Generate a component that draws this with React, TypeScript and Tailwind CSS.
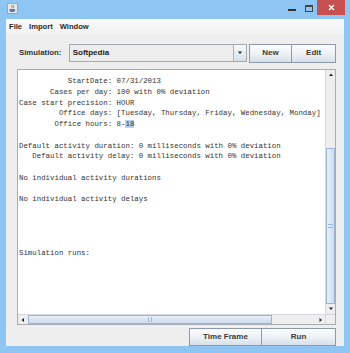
import React from 'react'

const ui = { fontFamily: '"Liberation Sans", Arial, sans-serif' }
const mono = { fontFamily: '"Liberation Mono", "Courier New", monospace' }

const JavaIcon = () => (
  <svg width="11" height="11" viewBox="0 0 11 11">
    <rect x="0.5" y="0.5" width="10" height="10" fill="#dfe6ee" stroke="#9aa6b4" />
    <path d="M5 2 C4 3.5 6 4 5 5.5 M6.5 2.5 C6 3.5 7 4 6.4 5" stroke="#e0602a" strokeWidth="0.9" fill="none" />
    <path d="M2.5 6 H8 V7.5 C8 8.6 7 9 5.2 9 C3.5 9 2.5 8.6 2.5 7.5 Z" fill="#5a7ba6" />
  </svg>
)

const Btn = ({ label, className }: { label: string; className: string }) => (
  <div
    className={`flex items-center justify-center border border-[#8d9aa9] bg-gradient-to-b from-[#fbfcfd] via-[#eef2f6] to-[#d6dfe9] text-[8px] font-bold text-[#3a3a3a] ${className}`}
    style={ui}
  >
    {label}
  </div>
)

const Arrow = ({ dir }: { dir: 'up' | 'down' | 'left' | 'right' }) => {
  const pts = {
    up: '1,4 5,4 3,1.5',
    down: '1,1.5 5,1.5 3,4',
    left: '4,1 4,5 1.5,3',
    right: '1.5,1 1.5,5 4,3',
  }[dir]
  return (
    <svg width="6" height="6" viewBox="0 0 6 6">
      <polygon points={pts} fill="#222" />
    </svg>
  )
}

const lines = [
  '           StartDate: 07/31/2013',
  '       Cases per day: 100 with 0% deviation',
  'Case start precision: HOUR',
  '         Office days: [Tuesday, Thursday, Friday, Wednesday, Monday]',
  'OFFICE',
  '',
  'Default activity duration: 0 milliseconds with 0% deviation',
  '   Default activity delay: 0 milliseconds with 0% deviation',
  '',
  'No individual activity durations',
  '',
  'No individual activity delays',
  '',
  '',
  '',
  '',
  'Simulation runs:',
]

export default function App() {
  return (
    <div className="flex h-[353px] w-[350px] flex-col bg-[#8ec5f2]">
      {/* title bar */}
      <div className="flex h-[19px] shrink-0 items-start">
        <div className="ml-[7px] mt-[3px]">
          <JavaIcon />
        </div>
        <div className="flex-1" />
        <div className="mt-[9px] h-[2px] w-[8px] bg-[#333]" />
        <div className="ml-[9px] mt-[5px] h-[7px] w-[8px] border border-[#444] border-t-2" />
        <div className="ml-[4px] mr-[5px] flex h-[15px] w-[28px] items-center justify-center bg-[#c75050]">
          <svg width="7" height="7" viewBox="0 0 7 7">
            <path d="M1 1 L6 6 M6 1 L1 6" stroke="#fff" strokeWidth="1.4" />
          </svg>
        </div>
      </div>

      {/* window body */}
      <div className="mx-[6px] mb-[8px] flex flex-1 flex-col bg-[#eeeeee]">
        {/* menu bar */}
        <div
          className="flex h-[15px] shrink-0 items-center gap-[7px] bg-gradient-to-b from-[#fafafa] to-[#f2f2f2] pl-[3px] text-[7.6px] font-bold text-[#2a2a2a]"
          style={ui}
        >
          <span>File</span>
          <span>Import</span>
          <span>Window</span>
        </div>

        <div className="flex flex-1 flex-col pl-[11px] pr-[8px] pt-[10px]">
          {/* simulation row */}
          <div className="flex h-[18px] items-center">
            <span className="ml-[2px] w-[50px] text-[7.8px] font-bold text-[#333]" style={ui}>
              Simulation:
            </span>
            <div className="flex h-[18px] w-[179px] border border-[#a3a9b1] bg-[#ededed]">
              <div className="flex flex-1 items-center pl-[3px] text-[8px] font-bold text-[#222]" style={ui}>
                Softpedia
              </div>
              <div className="flex w-[13px] items-center justify-center border-l border-[#a9b4c2] bg-gradient-to-b from-[#f8fafc] to-[#d5dfea]">
                <Arrow dir="down" />
              </div>
            </div>
            <Btn label="New" className="ml-[2px] h-[19px] w-[44px]" />
            <Btn label="Edit" className="h-[19px] w-[44px] border-l-0" />
          </div>

          {/* text area */}
          <div className="mt-[7px] grid h-[256px] grid-cols-[1fr_10px] grid-rows-[1fr_10px] border border-[#a6adb6] bg-white">
            <div className="overflow-hidden">
              <pre className="whitespace-pre pl-[1px] pt-[6px] text-[7.4px] leading-[10.75px] text-[#333]" style={mono}>
                {lines.map((l, i) =>
                  l === 'OFFICE' ? (
                    <div key={i}>
                      {'        Office hours: 8-'}
                      <span className="bg-[#b8d0ea]">18</span>
                    </div>
                  ) : (
                    <div key={i}>{l === '' ? '\u00a0' : l}</div>
                  )
                )}
              </pre>
            </div>
            {/* vertical scrollbar */}
            <div className="flex flex-col border-l border-[#d5d9de] bg-[#eeeeee]">
              <div className="flex h-[10px] items-center justify-center">
                <Arrow dir="up" />
              </div>
              <div className="h-[68px]" />
              <div className="flex flex-1 items-center justify-center border border-[#9ab6da] bg-gradient-to-r from-[#e8eff8] to-[#cddcee]">
                <div className="h-[4px] w-[5px] border-y border-[#9ab6da]" />
              </div>
              <div className="flex h-[10px] items-center justify-center">
                <Arrow dir="down" />
              </div>
            </div>
            {/* horizontal scrollbar */}
            <div className="flex border-t border-[#d5d9de] bg-[#eeeeee]">
              <div className="flex w-[10px] items-center justify-center">
                <Arrow dir="left" />
              </div>
              <div className="flex w-[244px] items-center justify-center border border-[#9ab6da] bg-gradient-to-b from-[#e8eff8] to-[#cddcee]">
                <div className="h-[5px] w-[4px] border-x border-[#9ab6da]" />
              </div>
              <div className="flex-1" />
              <div className="flex w-[9px] items-center justify-center">
                <Arrow dir="right" />
              </div>
            </div>
            <div className="border-l border-t border-[#d5d9de] bg-[#eeeeee]" />
          </div>

          {/* bottom buttons */}
          <div className="mt-[3px] flex justify-end">
            <Btn label="Time Frame" className="h-[18px] w-[73px]" />
            <Btn label="Run" className="h-[18px] w-[74px] border-l-0" />
          </div>
        </div>
      </div>
    </div>
  )
}
